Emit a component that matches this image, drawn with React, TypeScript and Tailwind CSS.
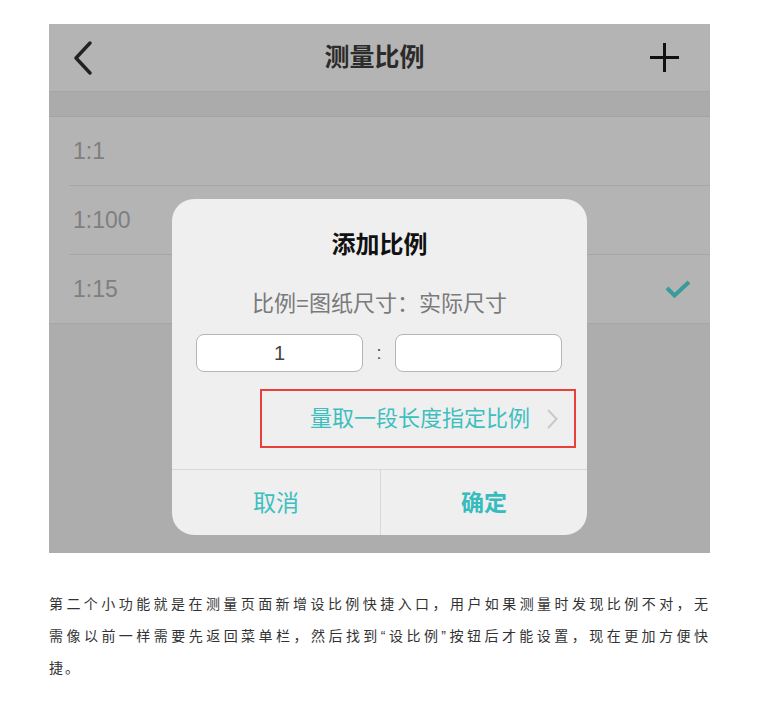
const cjk = 'font-["Liberation_Sans","Noto_Sans_CJK_SC",sans-serif]'

const rows = [
  { label: '1:1', checked: false },
  { label: '1:100', checked: false },
  { label: '1:15', checked: true },
]

function ScaleDialog() {
  return (
    <div className="absolute left-[123px] top-[175px] w-[415px] h-[336px] rounded-[22px] bg-[#efefef] flex flex-col">
      <div className="h-[90px] flex items-center justify-center pt-[2px]">
        <h2 className="text-[24px] font-bold text-[#111]">添加比例</h2>
      </div>
      <p className="h-[28px] flex items-center justify-center text-[22px] text-[#7a7a7a]">
        比例=图纸尺寸：实际尺寸
      </p>
      <div className="mt-[17px] px-6 flex items-center">
        <div className="w-[167px] h-[38px] rounded-[8px] bg-white border border-[#b5b5b5] flex items-center justify-center text-[20px] text-[#444]">
          1
        </div>
        <div className="w-[32px] text-center text-[18px] text-[#555]">:</div>
        <div className="w-[167px] h-[38px] rounded-[8px] bg-white border border-[#b5b5b5]" />
      </div>
      <div className="mt-[17px] ml-[88px] w-[316px] h-[59px] border-2 border-[#e8413b] flex items-center justify-end pr-[16px] gap-[17px]">
        <span className="text-[22px] text-[#3ebfbf]">量取一段长度指定比例</span>
        <svg width="11" height="20" viewBox="0 0 11 20" fill="none">
          <path d="M1.5 1.5 L9.5 10 L1.5 18.5" stroke="#c9c9c9" strokeWidth="2" strokeLinecap="round" />
        </svg>
      </div>
      <div className="mt-auto h-[66px] border-t border-[#d8d8d8] flex">
        <button className="w-[208px] flex items-center justify-center text-[23px] text-[#3ebfbf] pt-[2px]">
          取消
        </button>
        <button className="flex-1 border-l border-[#d8d8d8] flex items-center justify-center text-[23px] font-bold text-[#36bcbd] pt-[2px]">
          确定
        </button>
      </div>
    </div>
  )
}

export default function App() {
  return (
    <div className={`${cjk} bg-white w-[771px] h-[710px] pt-6 pl-[49px]`}>
      <div className="relative w-[661px] h-[529px] bg-[#acadac] overflow-hidden">
        <div className="h-[68px] bg-[#b4b4b4] border-b border-[#a5a5a5] flex items-center justify-between pl-[24px] pr-[31px]">
          <svg width="20" height="34" viewBox="0 0 20 34" fill="none">
            <path d="M17 2 L3 17 L17 32" stroke="#222" strokeWidth="3.4" strokeLinecap="round" strokeLinejoin="round" />
          </svg>
          <h1 className="text-[25px] font-semibold text-[#2b2b2b] pl-[6px]">测量比例</h1>
          <svg width="29" height="29" viewBox="0 0 29 29" fill="none">
            <path d="M14.5 0 V29 M0 14.5 H29" stroke="#111" strokeWidth="3" />
          </svg>
        </div>
        <div className="h-[25px] bg-[#aaabaa] border-b border-[#a3a3a3]" />
        <div className="bg-[#b4b4b4]">
          {rows.map((row, i) => (
            <div key={row.label}>
              <div className="h-[68px] flex items-center justify-between pl-[24px] pr-[19px]">
                <span className="text-[23px] text-[#7f7f7f]">{row.label}</span>
                {row.checked && (
                  <svg width="26" height="18" viewBox="0 0 26 18" fill="none">
                    <path d="M2 8 L9.5 15.5 L24 2" stroke="#3a9b98" strokeWidth="4" />
                  </svg>
                )}
              </div>
              <div className={`h-px bg-[#a6a6a6] ${i === rows.length - 1 ? '' : 'ml-[20px]'}`} />
            </div>
          ))}
        </div>
        <ScaleDialog />
      </div>
      <div className="mt-[35px] w-[661px] text-[14px] leading-[32px] text-[#333] tracking-[2px]">
        <div className="text-justify [text-align-last:justify]">
          第二个小功能就是在测量页面新增设比例快捷入口，用户如果测量时发现比例不对，无
        </div>
        <div className="text-justify [text-align-last:justify]">
          需像以前一样需要先返回菜单栏，然后找到“设比例”按钮后才能设置，现在更加方便快
        </div>
        <div>捷。</div>
      </div>
    </div>
  )
}
